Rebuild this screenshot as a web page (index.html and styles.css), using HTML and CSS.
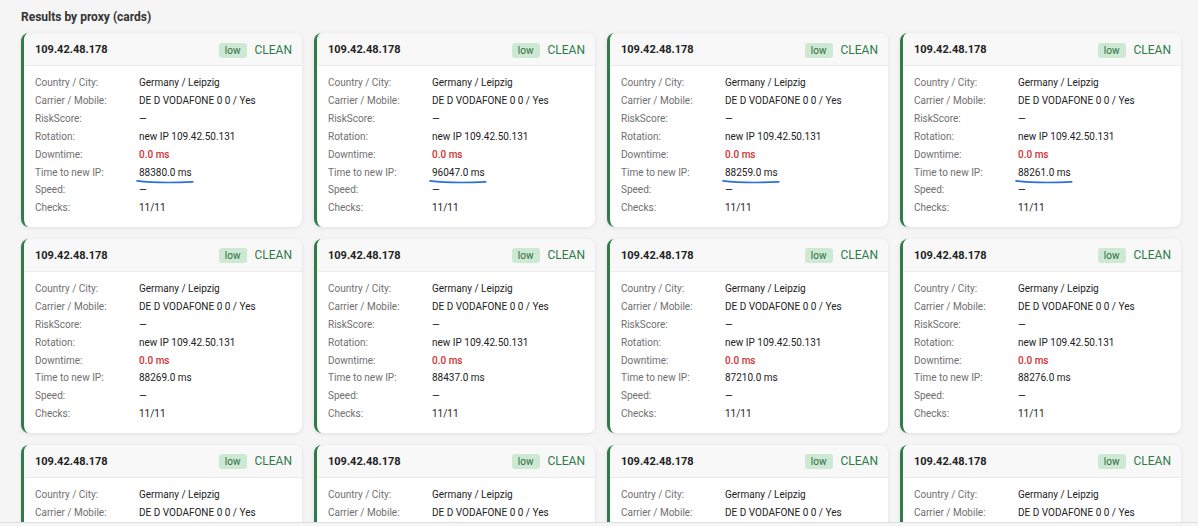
FILE: index.html
```html
<!DOCTYPE html>
<html lang="en">
<head>
  <meta charset="UTF-8" />
  <title>Results by proxy (cards)</title>
  <link rel="stylesheet" href="styles.css">
</head>
<body>
  <div class="page">
    <h4 class="section-title">Results by proxy (cards)</h4>
    <div class="cards" id="cards"></div>
  </div>

  <script>
    // Per-card "time to new IP" values, row by row
    const times = [
      '88380.0', '96047.0', '88259.0', '88261.0',
      '88269.0', '88437.0', '87210.0', '88276.0',
      '88301.0', '88190.0', '88344.0', '88212.0'
    ];

    function card(time, marked) {
      const mark = marked
        ? '<svg class="mark" viewBox="0 0 60 6" preserveAspectRatio="none"><path d="M1 2.2 C 15 4.2, 40 4.4, 59 3.4"/></svg>'
        : '';
      return `
        <div class="card">
          <div class="card-head">
            <span class="ip">109.42.48.178</span>
            <span class="risk">low</span>
            <span class="status">CLEAN</span>
          </div>
          <div class="card-body">
            <span class="k">Country / City:</span><span class="v">Germany / Leipzig</span>
            <span class="k">Carrier / Mobile:</span><span class="v">DE D VODAFONE 0 0 / Yes</span>
            <span class="k">RiskScore:</span><span class="v">—</span>
            <span class="k">Rotation:</span><span class="v">new IP 109.42.50.131</span>
            <span class="k">Downtime:</span><span class="v bad">0.0 ms</span>
            <span class="k">Time to new IP:</span><span class="v"><span class="time">${time} ms${mark}</span></span>
            <span class="k">Speed:</span><span class="v">—</span>
            <span class="k">Checks:</span><span class="v">11/11</span>
          </div>
        </div>`;
    }

    document.getElementById('cards').innerHTML =
      times.map((t, i) => card(t, i < 4)).join('');
  </script>
</body>
</html>
```

FILE: styles.css
```css
/* Global styles */
body {
  margin: 0;
  background: #f5f5f5;
  color: #222;
  font-family: Roboto, "Noto Sans", Arial, sans-serif;
}
.page {
  height: 523px;
  overflow: hidden;
  border-bottom: 1px solid #dedede;
  box-sizing: border-box;
}
.section-title {
  margin: 0;
  padding: 10px 0 0 21px;
  height: 23px;
  font-size: 12px;
  font-weight: 700;
  color: #333;
}
/* Card grid */
.cards {
  display: grid;
  grid-template-columns: repeat(4, 1fr);
  gap: 12px;
  padding: 0 17px 0 21px;
}
.card {
  background: #fff;
  border-left: 3px solid #2e7d46;
  border-radius: 8px;
  box-shadow: 0 1px 4px rgba(0, 0, 0, 0.09);
  overflow: hidden;
}
.card-head {
  display: flex;
  align-items: center;
  height: 32px;
  padding: 0 10px 0 11px;
  background: #f8f8f8;
  border-bottom: 1px solid #ebebeb;
}
.ip {
  flex: 1;
  font-size: 11px;
  font-weight: 700;
  color: #222;
  padding-top: 1px;
}
.risk {
  background: #cde9d3;
  color: #2f6a3d;
  font-size: 10px;
  line-height: 15px;
  padding: 0 6px;
  border-radius: 3px;
  margin-right: 8px;
  margin-top: 2px;
}
.status {
  color: #2d7a4a;
  font-size: 12px;
  font-weight: 400;
  padding-top: 1px;
}
.card-body {
  display: grid;
  grid-template-columns: 104px 1fr;
  grid-auto-rows: 17.85px;
  align-items: center;
  padding: 8px 11px 10px;
  font-size: 10px;
}
.k {
  color: #707070;
}
.v {
  color: #222;
}
.v.bad {
  color: #d12f2f;
  font-weight: 500;
}
/* Hand-drawn marker under the value */
.time {
  position: relative;
}
.mark {
  position: absolute;
  left: -3px;
  top: 12px;
  width: calc(100% + 5px);
  height: 5px;
  overflow: visible;
}
.mark path {
  fill: none;
  stroke: #2b6fdc;
  stroke-width: 1.6;
  stroke-linecap: round;
  vector-effect: non-scaling-stroke;
}
```
